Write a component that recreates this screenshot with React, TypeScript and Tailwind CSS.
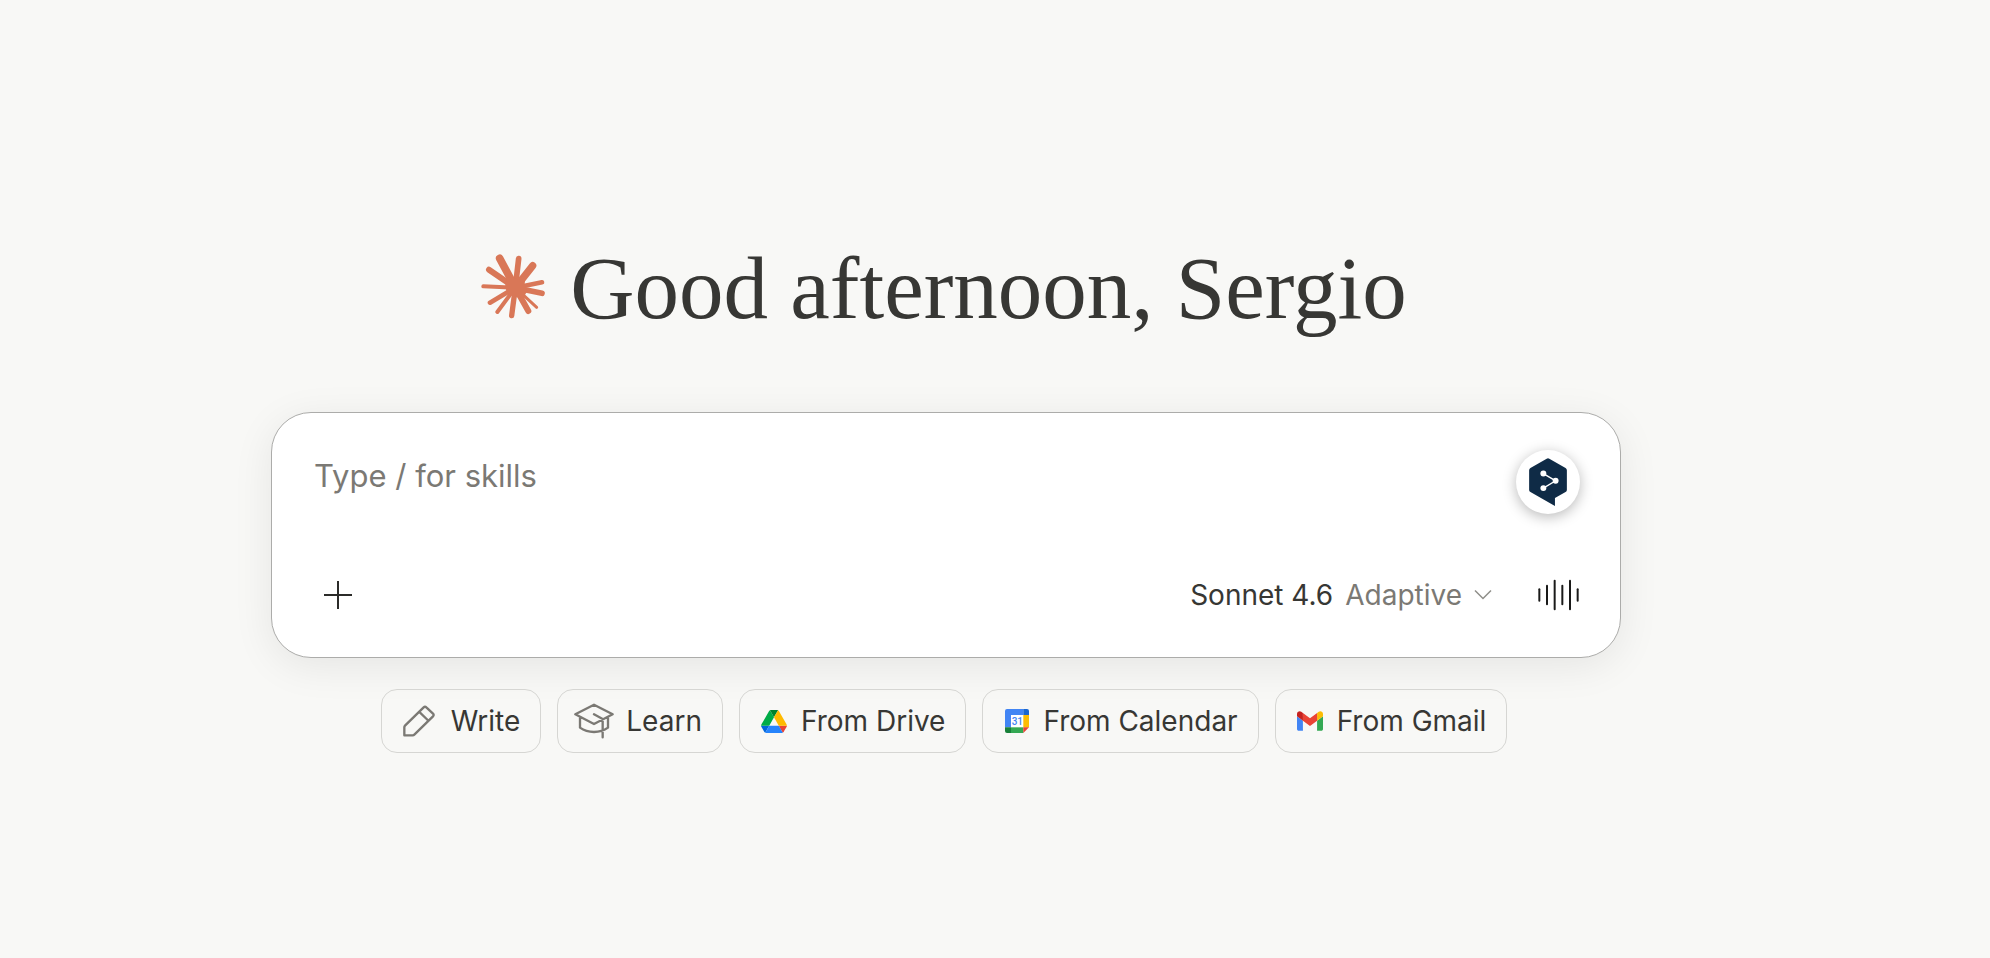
import type { ReactNode } from "react";

const RAYS = [
  { x: 89, y: 52, w: 23 },
  { x: 146, y: 53, w: 17 },
  { x: 188, y: 74, w: 22 },
  { x: 216, y: 124, w: 14 },
  { x: 216, y: 157, w: 17 },
  { x: 200, y: 199, w: 9 },
  { x: 175, y: 210, w: 18 },
  { x: 125, y: 224, w: 16 },
  { x: 82, y: 213, w: 12 },
  { x: 60, y: 185, w: 14 },
  { x: 40, y: 136, w: 12 },
  { x: 57, y: 86, w: 18 },
];

const BARS = [
  { x: 4, top: 31, bottom: 65 },
  { x: 27, top: 20, bottom: 76 },
  { x: 50, top: 5, bottom: 91 },
  { x: 73, top: 20, bottom: 76 },
  { x: 96, top: 5, bottom: 91 },
  { x: 119, top: 31, bottom: 65 },
];

const Starburst = () => (
  <svg viewBox="33 39 195 195" className="mb-1 size-[65px] shrink-0" aria-hidden="true">
    <g stroke="#d97757" strokeLinecap="round">
      {RAYS.map((ray) => (
        <line key={`${ray.x}-${ray.y}`} x1="136" y1="140" x2={ray.x} y2={ray.y} strokeWidth={ray.w} />
      ))}
    </g>
    <path d="M112 107 L137 112 L166 106 L164 130 L172 150 L160 170 L134 168 L114 158 L105 139 L108 124Z" fill="#d97757" />
  </svg>
);

const TranslateIcon = () => (
  <svg viewBox="117 83 114 145" className="h-12 w-[38px]" aria-hidden="true">
    <path
      d="M170 85q4-2 8 0l49 28q4 2 4 7v60q0 4-4 6l-32 18v24l-74-42q-4-2-4-6v-60q0-5 4-7z"
      fill="#0f2b46"
    />
    <path d="M160 130l37 22-37 22" fill="none" stroke="#fff" strokeWidth="4" />
    <circle cx="160" cy="130" r="9" fill="#fff" />
    <circle cx="197" cy="152" r="9" fill="#fff" />
    <circle cx="160" cy="174" r="9" fill="#fff" />
  </svg>
);

const WaveIcon = () => (
  <svg viewBox="0 0 123 96" className="h-8 w-[41px]" aria-hidden="true">
    <g stroke="#1a1a19" strokeWidth="6" strokeLinecap="round">
      {BARS.map((bar) => (
        <line key={bar.x} x1={bar.x} x2={bar.x} y1={bar.top} y2={bar.bottom} />
      ))}
    </g>
  </svg>
);

const PencilIcon = () => (
  <svg viewBox="95 73 96 96" className="size-8" fill="none" stroke="#7b7974" strokeWidth="7" strokeLinejoin="round" aria-hidden="true">
    <path d="M99 164v-24q0-3 2-5l56-55q4-4 8 0l20 19q4 4 0 8l-56 55q-2 2-5 2zM143 93l26 25" />
  </svg>
);

const CapIcon = () => (
  <svg viewBox="618 73 120 108" className="h-9 w-10" fill="none" stroke="#7b7974" strokeWidth="7" strokeLinejoin="round" strokeLinecap="round" aria-hidden="true">
    <path d="M622 107l56-29 56 29-56 29zM636 117v30q18 13 42 13t42-13v-30M678 107l26 14v55" />
  </svg>
);

const DriveIcon = () => (
  <svg viewBox="0 0 87.3 78" className="h-[23px] w-[26px]" aria-hidden="true">
    <path d="m6.6 66.85 3.85 6.65c.8 1.4 1.95 2.5 3.3 3.3l13.75-23.8h-27.5c0 1.55.4 3.1 1.2 4.5z" fill="#0066da" />
    <path d="m43.65 25-13.75-23.8c-1.35.8-2.5 1.9-3.3 3.3l-25.4 44a9.06 9.06 0 0 0 -1.2 4.5h27.5z" fill="#00ac47" />
    <path d="m73.55 76.8c1.35-.8 2.5-1.9 3.3-3.3l1.6-2.75 7.65-13.25c.8-1.4 1.2-2.95 1.2-4.5h-27.5l5.85 11.5z" fill="#ea4335" />
    <path d="m43.65 25 13.75-23.8c-1.35-.8-2.9-1.2-4.5-1.2h-18.5c-1.6 0-3.15.45-4.5 1.2z" fill="#00832d" />
    <path d="m59.8 53h-32.3l-13.75 23.8c1.35.8 2.9 1.2 4.5 1.2h50.8c1.6 0 3.15-.45 4.5-1.2z" fill="#2684fc" />
    <path d="m73.4 26.5-12.7-22c-.8-1.4-1.95-2.5-3.3-3.3l-13.75 23.8 16.15 28h27.45c0-1.55-.4-3.1-1.2-4.5z" fill="#ffba00" />
  </svg>
);

const CalendarIcon = () => (
  <svg viewBox="0 0 72 72" className="size-6" aria-hidden="true">
    <path d="M18 18h37v37H18z" fill="#fff" />
    <path d="M6 0h49v18H18v37H0V6q0-6 6-6z" fill="#4285f4" />
    <path d="M55 0h11q6 0 6 6v12H55z" fill="#1967d2" />
    <path d="M55 18h17v37H55z" fill="#fbbc04" />
    <path d="M18 55h37v17H18z" fill="#34a853" />
    <path d="M0 55h18v17H6q-6 0-6-6z" fill="#188038" />
    <path d="M55 55h17L55 72z" fill="#ea4335" />
    <text x="37" y="47" textAnchor="middle" fontSize="30" className="font-['Roboto',sans-serif] font-medium" fill="#4285f4">
      31
    </text>
  </svg>
);

const GmailIcon = () => (
  <svg viewBox="52 42 88 66" className="h-5 w-[26px]" aria-hidden="true">
    <path fill="#4285f4" d="M58 108h14V74L52 59v43c0 3.32 2.69 6 6 6" />
    <path fill="#34a853" d="M120 108h14c3.32 0 6-2.69 6-6V59l-20 15" />
    <path fill="#fbbc04" d="M120 48v26l20-15v-8c0-7.42-8.47-11.65-14.4-7.2" />
    <path fill="#ea4335" d="M72 74V48l24 18 24-18v26L96 92" />
    <path fill="#c5221f" d="M52 51v8l20 15V48l-5.6-4.2c-5.94-4.45-14.4-.22-14.4 7.2" />
  </svg>
);

interface ChipProps {
  icon: ReactNode;
  label: string;
  className: string;
}

const Chip = ({ icon, label, className }: ChipProps) => (
  <button
    type="button"
    className={`flex h-16 items-center rounded-2xl border border-[#d6d6d3] pr-5 text-[28px] leading-8 whitespace-nowrap text-[#373734] ${className}`}
  >
    {icon}
    {label}
  </button>
);

export default function App() {
  return (
    <main className="min-h-screen bg-[#f8f8f6] pt-60 pr-[98px] font-['Inter',sans-serif]">
      <div className="mx-auto flex w-full max-w-[1350px] flex-col">
        <div className="flex items-center justify-center gap-6 pr-1">
          <Starburst />
          <h1 className="font-['Liberation_Serif',serif] text-[89px] leading-24 whitespace-nowrap text-[#373734]">
            Good afternoon, Sergio
          </h1>
        </div>

        <form
          className="mt-19 flex flex-col rounded-[40px] border border-[#acacaa] bg-white px-10 pt-[37px] pb-[38px] shadow-[0_8px_40px_rgba(0,0,0,0.08)]"
          onSubmit={(e) => e.preventDefault()}
        >
          <div className="flex items-start gap-4">
            <textarea
              rows={1}
              aria-label="Message"
              placeholder="Type / for skills"
              className="h-14 flex-1 resize-none overflow-hidden py-1.5 pl-0.5 text-[31px] leading-10 text-[#373734] outline-none placeholder:text-[#7b7974]"
            />
            <button
              type="button"
              aria-label="Translate"
              className="flex size-16 items-center justify-center rounded-full bg-white shadow-[0_3px_14px_rgba(0,0,0,0.28)]"
            >
              <TranslateIcon />
            </button>
          </div>

          <div className="mt-[57px] flex h-12 items-center pr-px">
            <button type="button" aria-label="Add" className="flex h-12 w-[52px] items-center justify-center">
              <svg viewBox="0 0 28 28" className="size-7" stroke="#2b2b29" strokeWidth="2" aria-hidden="true">
                <path d="M14 0v28M0 14h28" />
              </svg>
            </button>
            <button
              type="button"
              className="ml-auto flex items-center gap-3 text-[28px] leading-8 whitespace-nowrap text-[#373734]"
            >
              Sonnet 4.6
              <span className="text-[#7b7974]">Adaptive</span>
              <svg viewBox="0 0 18 12" className="h-3 w-[18px]" fill="none" stroke="#8f8e89" strokeWidth="1.5" aria-hidden="true">
                <path d="M1 1.500l8 8 8-8" />
              </svg>
            </button>
            <button type="button" aria-label="Voice mode" className="ml-[46px]">
              <WaveIcon />
            </button>
          </div>
        </form>

        <div className="mt-[31px] flex justify-center gap-4 pr-1">
          <Chip icon={<PencilIcon />} label="Write" className="gap-4 pl-[21px]" />
          <Chip icon={<CapIcon />} label="Learn" className="gap-3 pl-4" />
          <Chip icon={<DriveIcon />} label="From Drive" className="gap-3.5 pl-[21px]" />
          <Chip icon={<CalendarIcon />} label="From Calendar" className="gap-3.5 pl-[22px]" />
          <Chip icon={<GmailIcon />} label="From Gmail" className="gap-3.5 pl-[21px]" />
        </div>
      </div>
    </main>
  );
}
